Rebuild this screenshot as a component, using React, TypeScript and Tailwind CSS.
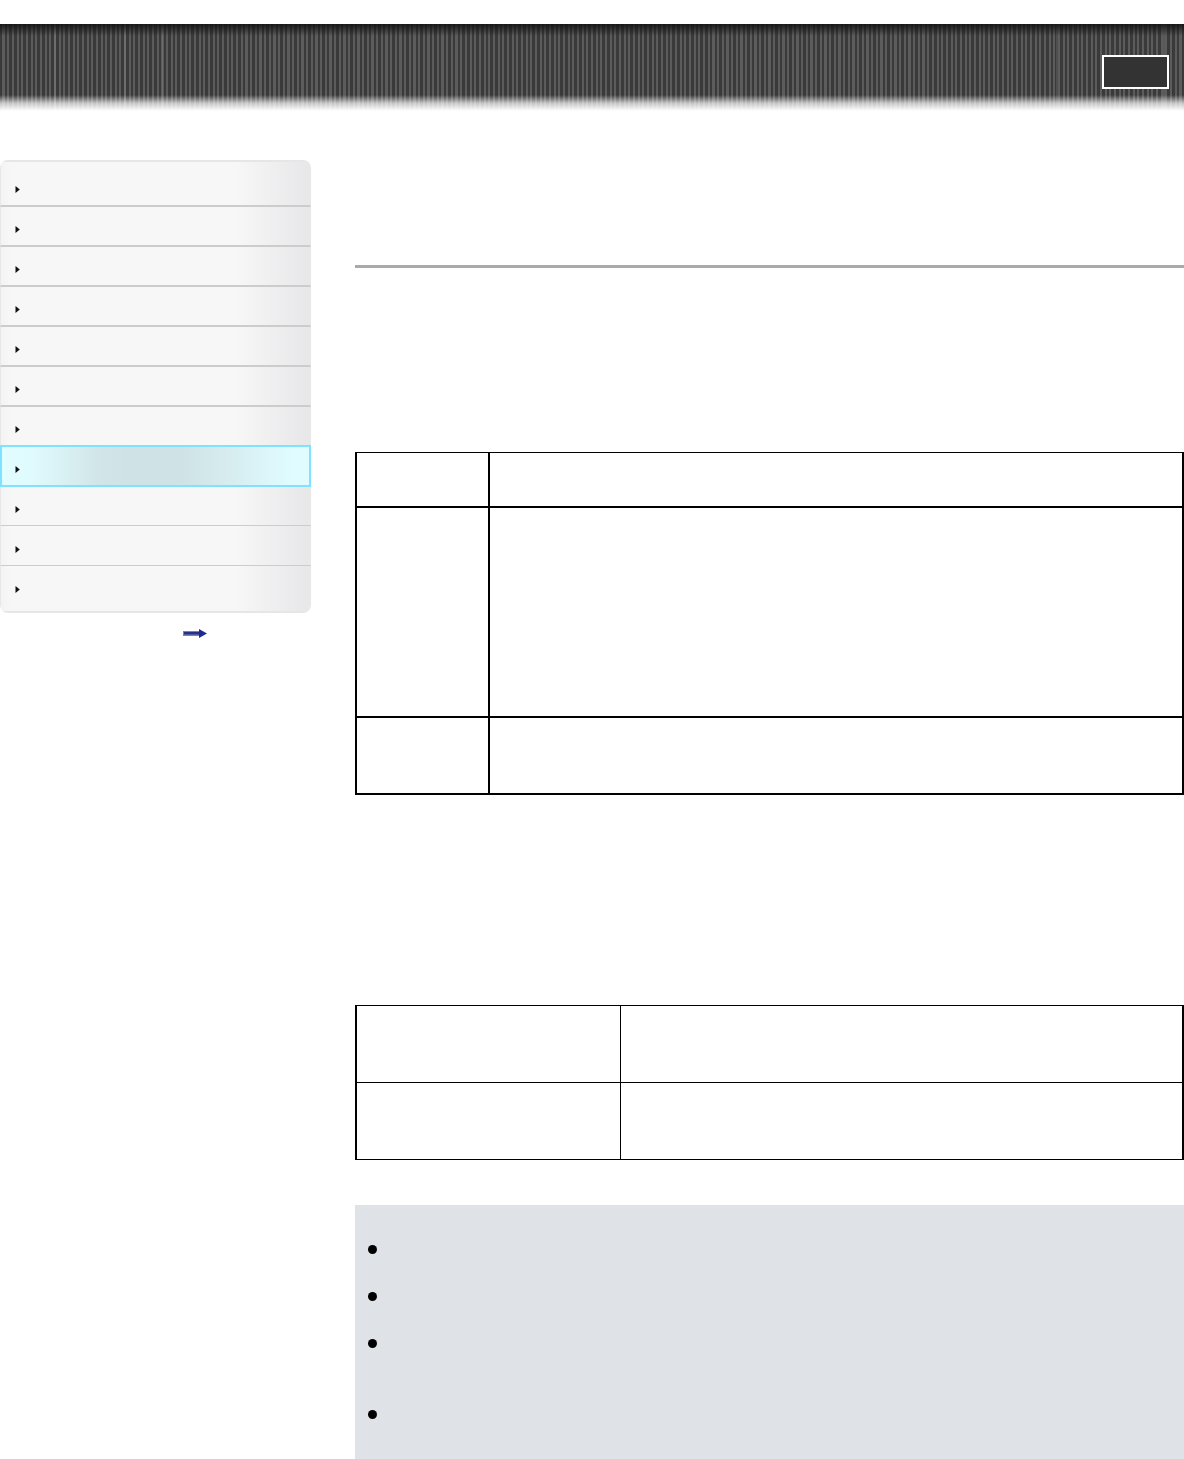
function NavArrow() {
  return (
    <svg width="5" height="7" viewBox="0 0 5 7" className="block">
      <path d="M0.5 0 L4.8 3.5 L0.5 7 Z" fill="#111" />
    </svg>
  )
}

function NavRow({ className }: { className: string }) {
  return (
    <div className={`box-border w-full ${className}`}>
      <NavArrow />
    </div>
  )
}

const plain =
  'border-x border-x-[#e8e8e8] pl-[14px] bg-[linear-gradient(90deg,#f3f3f3_0,#f7f7f7_9px,#f7f7f7_235px,#e9e9eb_300px,#e8e8e8_100%)]'
const thick = `${plain} h-[40px] border-b-2 border-b-[#cccccc] pt-[19px]`

function Sidebar() {
  return (
    <nav className="mt-[49px] w-[311px] shrink-0">
      <div className="overflow-hidden rounded-lg">
        <NavRow className={`${plain} h-[47px] border-t-2 border-t-[#e6e6e6] border-b-2 border-b-[#cccccc] pt-[24px]`} />
        <NavRow className={thick} />
        <NavRow className={thick} />
        <NavRow className={thick} />
        <NavRow className={thick} />
        <NavRow className={thick} />
        <NavRow className={`${plain} h-[38px] pt-[19px]`} />
        <NavRow className="h-[42px] border-2 border-[#7fe3ff] bg-[linear-gradient(90deg,#e2fdff_0,#e0fbfd_30px,#d2e6e9_95px,#cfe3e6_125px,#cfe3e6_180px,#d6ecef_225px,#e0fcff_290px,#e0fcff_100%)] pt-[19px] pl-[13px]" />
        <NavRow className={`${plain} h-[39px] border-b border-b-[#cccccc] pt-[19px]`} />
        <NavRow className={`${plain} h-[40px] border-b border-b-[#cccccc] pt-[20px]`} />
        <NavRow className={`${plain} h-[47px] border-b-2 border-b-[#e6e6e6] pt-[20px]`} />
      </div>
      <div className="mt-[16px] ml-[183px]">
        <svg width="24" height="9" viewBox="0 0 24 9" className="block">
          <rect x="0" y="2" width="18" height="5" fill="#7c82b0" />
          <rect x="1" y="3" width="17" height="2.5" fill="#25308a" />
          <path d="M16 0 L24 4.5 L16 9 Z" fill="#1f2a90" />
        </svg>
      </div>
    </nav>
  )
}

function FirstTable() {
  return (
    <div className="mt-[184px] grid grid-cols-[133px_1fr] border-x-2 border-t border-b-2 border-black">
      <div className="h-[55px] border-r-2 border-b-2 border-black" />
      <div className="h-[55px] border-b-2 border-black" />
      <div className="h-[210px] border-r-2 border-b-2 border-black" />
      <div className="h-[210px] border-b-2 border-black" />
      <div className="h-[75px] border-r-2 border-black" />
      <div className="h-[75px]" />
    </div>
  )
}

function SecondTable() {
  return (
    <div className="mt-[210px] grid grid-cols-[264px_1fr] border-x-2 border-y border-black">
      <div className="h-[77px] border-r border-b border-black" />
      <div className="h-[77px] border-b border-black" />
      <div className="h-[76px] border-r border-black" />
      <div className="h-[76px]" />
    </div>
  )
}

function Notes() {
  const items = ['h-[47px]', 'h-[47px]', 'h-[71px]', 'h-[49px]']
  return (
    <ul className="mt-[45px] h-[254px] bg-[#dfe2e7] pt-[40px] pl-[13px]">
      {items.map((h, i) => (
        <li key={i} className={h}>
          <div className="h-[9px] w-[9px] rounded-full bg-black" />
        </li>
      ))}
    </ul>
  )
}

export default function App() {
  return (
    <div className="min-h-[1459px] bg-white pt-[24px]">
      <header className="flex h-[87px] justify-end bg-[linear-gradient(180deg,#111111e0_0,#11111100_12px,#ffffff00_71px,#ffffffb0_79px,#ffffffee_85px,#ffffff_87px),linear-gradient(90deg,#0000_54px,#8886_54px,#8886_56px,#0000_56px,#0000_124px,#8886_124px,#8886_126px,#0000_126px,#0000_162px,#8886_162px,#8886_164px,#0000_164px,#0000_1056px,#8884_1056px,#8884_1058px,#0000_1058px,#0000_1163px,#8886_1163px,#8886_1165px,#0000_1165px),repeating-linear-gradient(90deg,#3a3a3a_0,#3a3a3a_2.5px,#5c5c5c_2.5px,#5c5c5c_4.67px)] pt-[31px] pr-[15px]">
        <div className="h-[34px] w-[67px] border-2 border-white bg-[#333333]" />
      </header>
      <div className="flex">
        <Sidebar />
        <main className="ml-[44px] w-[829px]">
          <div className="mt-[154px] h-[3px] bg-[#aaaaaa]" />
          <FirstTable />
          <SecondTable />
          <Notes />
        </main>
      </div>
    </div>
  )
}
